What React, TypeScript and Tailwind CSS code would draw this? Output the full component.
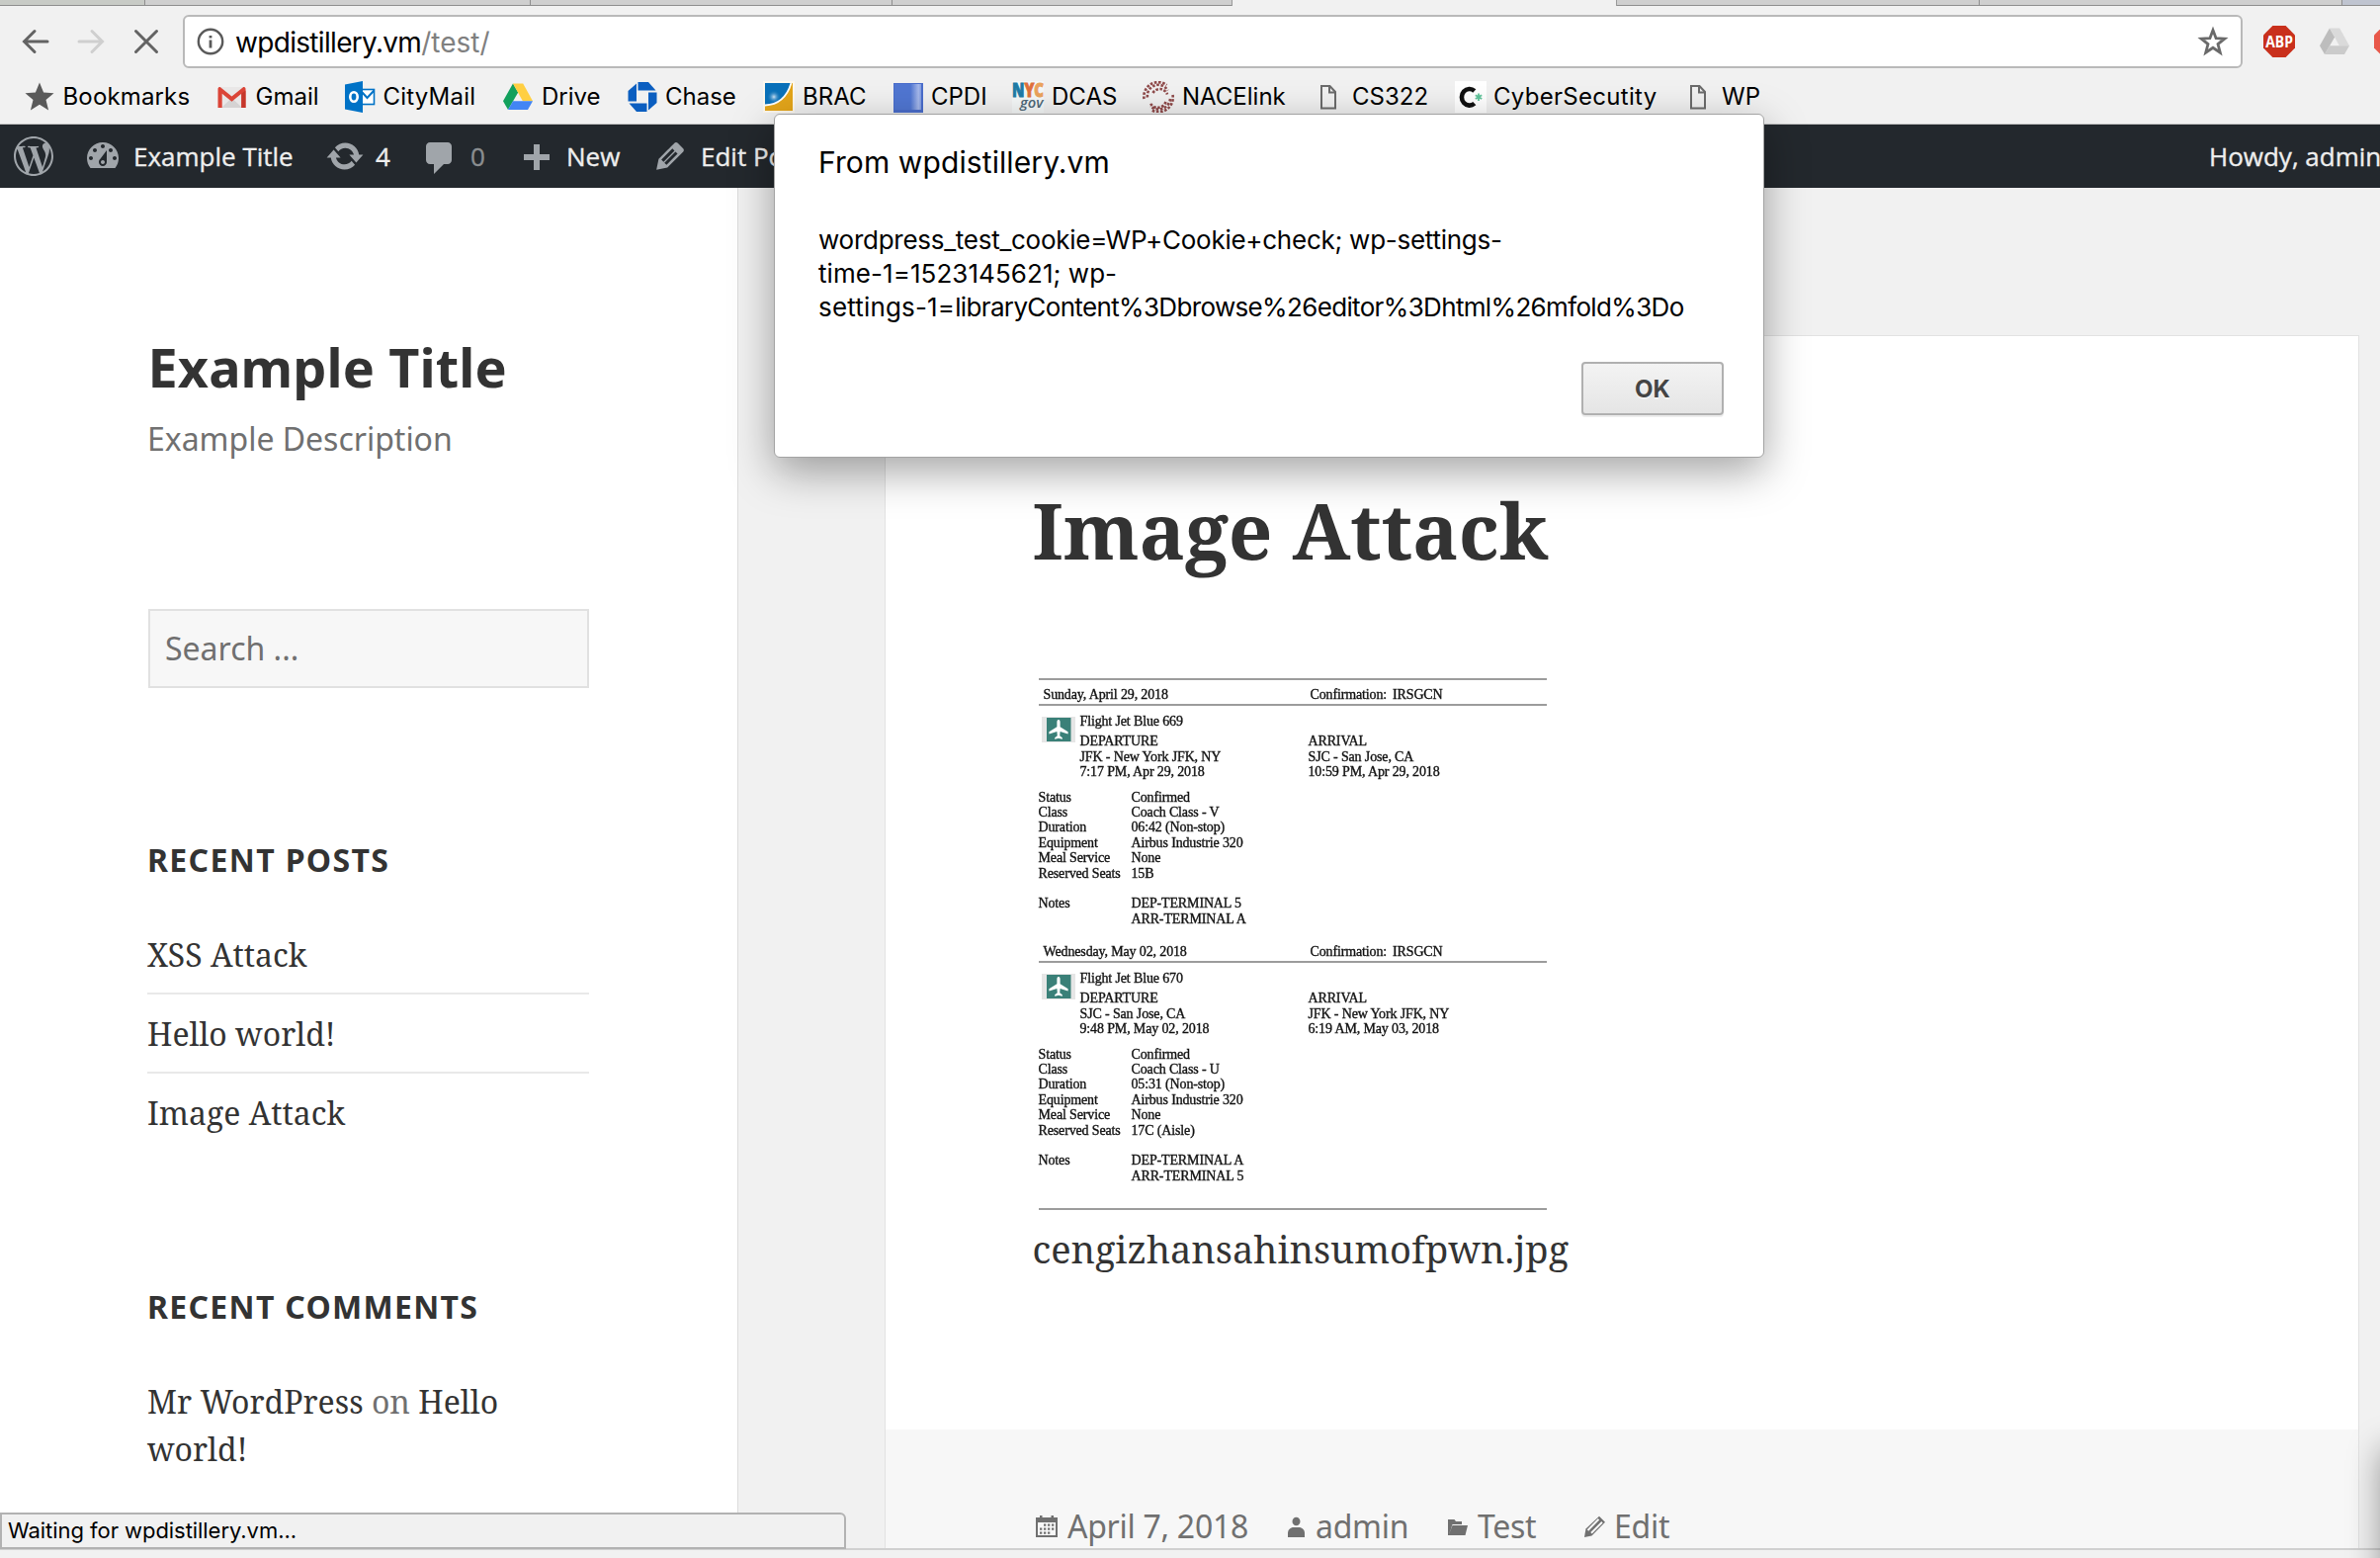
import type { ReactNode } from "react";
import { SiWordpress } from "react-icons/si";

/* ---------- browser chrome icons ---------- */

function NavIcon({ d, className }: { d: string; className: string }) {
  return (
    <svg viewBox="0 0 32 32" className={`size-8 shrink-0 fill-none ${className}`} strokeWidth="3">
      <path d={d} strokeLinecap="round" />
    </svg>
  );
}

function InfoIcon() {
  return (
    <svg viewBox="0 0 28 28" className="size-7 shrink-0">
      <circle cx="14" cy="14" r="12.2" fill="none" stroke="#5a5a5a" strokeWidth="2.4" />
      <path d="M12.6 8h2.8v2.6h-2.8zM12.6 12.4h2.8v8h-2.8z" fill="#5a5a5a" />
    </svg>
  );
}

function StarOutline() {
  return (
    <svg viewBox="0 0 32 32" className="size-8 shrink-0">
      <path
        d="M16 4.5l3.1 8.2 8.7.5-6.8 5.4 2.3 8.6-7.3-4.9-7.3 4.9 2.3-8.6-6.8-5.4 8.7-.5z"
        fill="none"
        stroke="#6a6a6a"
        strokeWidth="2.8"
      />
    </svg>
  );
}

function AdblockIcon() {
  return (
    <svg viewBox="0 0 32 32" className="size-8 shrink-0">
      <path d="M9.4 0h13.2L32 9.4v13.2L22.6 32H9.4L0 22.600V9.400z" fill="#c9301c" />
      <text
        x="2.300"
        y="22"
        textLength="27.600"
        lengthAdjust="spacingAndGlyphs"
        fontFamily="Open Sans, sans-serif"
        fontWeight="700"
        fontSize="16.500"
        fill="#fff"
      >
        ABP
      </text>
    </svg>
  );
}

function DriveShape({ left, right, bottom }: { left: string; right: string; bottom: string }) {
  return (
    <svg viewBox="0 0 32 32" className="size-8 shrink-0">
      <path d="M11 2.5L1 20.3l5 8.7 10.2-17.6z" fill={left} />
      <path d="M11 2.5h10.2L31 20.3H20.9z" fill={right} />
      <path d="M11 20.3h20L26 29H6z" fill={bottom} />
    </svg>
  );
}

function BookmarkStar() {
  return (
    <svg viewBox="0 0 32 32" className="size-8 shrink-0">
      <path d="M16 1.5l4.1 9.9 10.4.8-8 6.8 2.6 10.5L16 23.8l-9.100 5.700 2.600-10.500-8-6.800 10.400-.8z" fill="#5a5a5a" />
    </svg>
  );
}

function GmailIcon() {
  return (
    <svg viewBox="0 0 32 32" className="size-8 shrink-0">
      <rect x="2" y="6" width="27" height="21" rx="1.500" fill="#e9e7e7" />
      <path d="M5 27l10.500-10L26 27z" fill="#d5d3d3" />
      <path d="M1.500 27V8c0-1.500 1-2 2.200-2L15.500 15.500 27.300 6c1.200 0 2.200.5 2.200 2v19h-4.200V12.800l-9.800 8-9.800-8V27z" fill="#db4437" />
      <path d="M25.300 12.800L29.500 9.500V27h-4.200z" fill="#c5372b" />
    </svg>
  );
}

function OutlookIcon() {
  return (
    <svg viewBox="0 0 32 32" className="size-8 shrink-0">
      <rect x="17" y="8.500" width="12.500" height="15" fill="#fff" stroke="#0072c6" strokeWidth="1.600" />
      <path d="M17.500 11.500l5 5.500 7-7.500" fill="none" stroke="#0072c6" strokeWidth="2" />
      <path d="M0 3.500L18 0v32L0 28.500z" fill="#0072c6" />
      <ellipse cx="9" cy="16" rx="3.700" ry="4.700" fill="none" stroke="#fff" strokeWidth="2.600" />
    </svg>
  );
}

function ChaseIcon() {
  return (
    <svg viewBox="0 0 32 32" className="size-8 shrink-0" fill="#0b5ec0">
      <path d="M11.500 1h10.500l7.500 8.500H11.500z" />
      <path d="M30.500 11.500V22l-8.500 7.500V11.500z" />
      <path d="M20.500 31H10l-7.500-8.500h18z" />
      <path d="M1.500 20.500V10L10 2.500v18z" />
    </svg>
  );
}

function BracIcon() {
  return (
    <svg viewBox="0 0 32 32" className="size-8 shrink-0">
      <defs>
        <radialGradient id="brac-glow">
          <stop offset="0" stopColor="#cfe4f4" />
          <stop offset="1" stopColor="#0a71b9" stopOpacity="0" />
        </radialGradient>
      </defs>
      <rect width="32" height="32" fill="#fdf8ee" />
      <rect x="2" y="2" width="28" height="28" fill="#0a71b9" />
      <circle cx="11" cy="16" r="7" fill="url(#brac-glow)" />
      <path d="M30 2v28H2v-6C15 24 24 17 28.500 2z" fill="#e3a51a" />
      <path d="M2 24.500C15 24 24 17 28.500 2" fill="none" stroke="#fff" strokeWidth="1.800" />
    </svg>
  );
}

function CpdiIcon() {
  return (
    <svg viewBox="0 0 32 32" className="size-8 shrink-0">
      <defs>
        <linearGradient id="cpdi-shine">
          <stop offset="0.600" stopColor="#5076d2" />
          <stop offset="0.900" stopColor="#a5b8ea" />
          <stop offset="1" stopColor="#7f9be0" />
        </linearGradient>
      </defs>
      <rect y="2" width="30" height="30" fill="#4a6dcb" />
      <rect x="1" y="3" width="27" height="26" fill="url(#cpdi-shine)" />
    </svg>
  );
}

function NycIcon() {
  return (
    <svg viewBox="0 0 32 32" className="size-8 shrink-0 overflow-visible">
      <rect width="32" height="32" fill="#f5f8f8" />
      <text
        x="0"
        y="15.500"
        textLength="32"
        lengthAdjust="spacingAndGlyphs"
        fontFamily="Open Sans, sans-serif"
        fontWeight="800"
        fontSize="20"
        strokeWidth="1"
      >
        <tspan fill="#1f7ba6" stroke="#1f7ba6">N</tspan>
        <tspan fill="#e0703c" stroke="#e0703c">Y</tspan>
        <tspan fill="#eba35c" stroke="#eba35c">C</tspan>
      </text>
      <text
        x="8"
        y="27"
        textLength="23.500"
        lengthAdjust="spacingAndGlyphs"
        fontFamily="Open Sans, sans-serif"
        fontStyle="italic"
        fontWeight="600"
        fontSize="15"
        fill="#4f6878"
      >
        gov
      </text>
    </svg>
  );
}

function NaceIcon() {
  return (
    <svg viewBox="0 0 32 32" className="size-8 shrink-0 fill-none" stroke="#8f4a4a" strokeWidth="2.600">
      <path d="M1.500 18A14.500 14.500 0 0 1 24.500 4" strokeDasharray="2.600 1.600" />
      <path d="M5 16.500A11 11 0 0 1 25.500 9.500" strokeDasharray="2.600 1.700" />
      <path d="M10.500 12A8 8 0 0 1 25 13.500" strokeDasharray="2.600 1.500" />
      <path d="M30.500 14A14.500 14.500 0 0 1 8.500 29" strokeDasharray="2.600 1.600" />
      <path d="M28 18A12 12 0 0 1 8 25.500" strokeDasharray="2.600 1.700" />
      <path d="M23.500 21A8.500 8.500 0 0 1 7.500 21.500" strokeDasharray="2.600 1.500" />
    </svg>
  );
}

function PageIcon() {
  return (
    <svg viewBox="0 0 32 32" className="size-8 shrink-0 fill-none" stroke="#6b6b6b" strokeWidth="2">
      <path d="M9 5h8.500l5.500 6v16.500H9z" />
      <path d="M17 5v6.500h6" />
    </svg>
  );
}

function CyberIcon() {
  return (
    <svg viewBox="0 0 32 32" className="size-8 shrink-0">
      <rect width="32" height="32" fill="#fff" />
      <path d="M19.800 10a7.800 8.300 0 1 0 0 12.600" fill="none" stroke="#111" strokeWidth="4.600" />
      <path d="M24 12.500v7.500M20.800 14.300l6.400 3.800M27.200 14.300l-6.400 3.800" stroke="#5fc39a" strokeWidth="1.800" />
    </svg>
  );
}

/* ---------- admin bar ---------- */

function AdminIcon({ d }: { d: string }) {
  return (
    <svg viewBox="0 0 20 20" className="size-10 shrink-0 fill-[#a0a5aa]">
      <path d={d} />
    </svg>
  );
}

const DASHBOARD =
  "M3.760 16h12.480c1.100-1.370 1.760-3.110 1.760-5 0-4.420-3.580-8-8-8s-8 3.580-8 8c0 1.890.66 3.630 1.760 5zM10 4c.55 0 1 .45 1 1s-.45 1-1 1-1-.45-1-1 .45-1 1-1zM6 6c.55 0 1 .45 1 1s-.45 1-1 1-1-.45-1-1 .45-1 1-1zm8 0c.55 0 1 .45 1 1s-.45 1-1 1-1-.45-1-1 .45-1 1-1zm-5.370 5.550L12 7v6c0 1.100-.9 2-2 2s-2-.9-2-2c0-.57.24-1.080.63-1.450zM4 10c.55 0 1 .45 1 1s-.45 1-1 1-1-.45-1-1 .45-1 1-1zm12 0c.55 0 1 .45 1 1s-.45 1-1 1-1-.45-1-1 .45-1 1-1zm-5 3c0-.55-.45-1-1-1s-1 .45-1 1 .45 1 1 1 1-.45 1-1z";
const UPDATE =
  "M10.200 3.280c3.530 0 6.430 2.610 6.920 6h2.080l-3.500 4-3.500-4h2.320c-.45-1.970-2.210-3.450-4.320-3.450-1.450 0-2.730.71-3.540 1.780L4.950 5.660C6.230 4.200 8.110 3.280 10.200 3.280zm-.4 13.440c-3.520 0-6.430-2.610-6.920-6H.8l3.500-4c1.170 1.330 2.330 2.670 3.500 4H5.480c.45 1.970 2.210 3.450 4.320 3.450 1.450 0 2.730-.71 3.540-1.780l1.710 1.950c-1.280 1.460-3.150 2.380-5.250 2.380z";
const COMMENT =
  "M5 2h9c1.100 0 2 .9 2 2v7c0 1.100-.9 2-2 2h-2l-5 5v-5H5c-1.100 0-2-.9-2-2V4c0-1.100.9-2 2-2z";
const PLUS = "M9 4h3v5h5v3h-5v5H9v-5H4V9h5z";
const EDIT =
  "M13.890 3.390l2.710 2.720c.46.46.42 1.240.03 1.640l-8.010 8.020-5.560 1.160 1.160-5.580s7.600-7.630 7.990-8.030c.39-.39 1.220-.39 1.680.07zm-2.730 2.790l-5.590 5.610 1.110 1.110 5.540-5.650zm-2.970 8.230l5.580-5.600-1.070-1.080-5.590 5.600z";

function AdminBar() {
  return (
    <div className="flex h-16 items-center bg-[#23282d] font-['Open_Sans',sans-serif] text-[26px] leading-[64px] whitespace-nowrap text-[#eee] [-webkit-text-stroke:0.35px_currentColor]">
      <SiWordpress className="ml-[14px] size-10 shrink-0 text-[#a0a5aa]" />
      <div className="ml-[30px] flex w-[245px] shrink-0 items-center gap-[11px]">
        <AdminIcon d={DASHBOARD} />
        Example Title
      </div>
      <div className="flex w-24 shrink-0 items-center gap-[11px]">
        <AdminIcon d={UPDATE} />4
      </div>
      <div className="flex w-[97px] shrink-0 items-center gap-[11px]">
        <span className="mt-1 flex">
          <AdminIcon d={COMMENT} />
        </span>
        <span className="text-[#8b8e91]">0</span>
      </div>
      <div className="flex w-[136px] shrink-0 items-center gap-[11px]">
        <AdminIcon d={PLUS} />
        New
      </div>
      <div className="flex shrink-0 items-center gap-[11px]">
        <AdminIcon d={EDIT} />
        Edit Post
      </div>
      <span className="ml-auto w-[174px] shrink-0 overflow-hidden pl-px">Howdy, admin</span>
    </div>
  );
}

/* ---------- browser chrome ---------- */

function TabStrip() {
  return (
    <div className="flex h-[6px] overflow-hidden bg-[#cfcfcf]">
      <div className="w-[146px] border-b border-[#8e8e8e] bg-[#c8cbc6]" />
      <div className="w-[390px] border-b border-l border-[#8e8e8e]" />
      <div className="w-[366px] border-b border-l border-[#8e8e8e]" />
      <div className="w-[344px] border-b border-l border-[#8e8e8e]" />
      <div className="w-[390px] border-x border-[#9a9a9a] bg-[#f1f1f1]" />
      <div className="w-[366px] border-b border-[#8e8e8e]" />
      <div className="w-[367px] border-b border-l border-[#8e8e8e]" />
      <div className="flex-1 border-b border-l border-[#8e8e8e] bg-[#bfc4d0]" />
    </div>
  );
}

function Toolbar() {
  return (
    <div className="flex h-[64px] items-center pt-[8px]">
      <div className="ml-[20px] flex gap-6">
        <NavIcon className="stroke-[#636363]" d="M28 16H5M15 5.500L4.500 16 15 26.500" />
        <NavIcon className="stroke-[#cfcfcf]" d="M4 16h23M17 5.500L27.500 16 17 26.500" />
        <NavIcon className="stroke-[#636363]" d="M5.500 5.500l21 21M26.500 5.500l-21 21" />
      </div>
      <div className="ml-[21px] flex h-[54px] w-[2084px] shrink-0 items-center rounded-[6px] border-2 border-[#b9b9b9] bg-white px-3 font-[Inter,sans-serif]">
        <InfoIcon />
        <span className="mt-[2px] ml-[11px] text-[28px] leading-[40px] tracking-[-0.68px] text-black">wpdistillery.vm</span>
        <span className="mt-[2px] text-[28px] leading-[40px] text-[#808080]">/test/</span>
        <span className="ml-auto flex">
          <StarOutline />
        </span>
      </div>
      <div className="ml-[21px] flex shrink-0 gap-6">
        <AdblockIcon />
        <DriveShape left="#bdbdbd" right="#dadada" bottom="#cbcbcb" />
        <svg viewBox="0 0 32 32" className="size-8 shrink-0">
          <path d="M9.400 0h13.200L32 9.400v13.200L22.600 32H9.400L0 22.600V9.400z" fill="#e8584a" />
        </svg>
      </div>
    </div>
  );
}

const BOOKMARKS: { label: string; icon: ReactNode; box: string }[] = [
  { label: "Bookmarks", icon: <BookmarkStar />, box: "w-[195px] gap-[7.5px] tracking-[0.15px]" },
  { label: "Gmail", icon: <GmailIcon />, box: "w-[130px] gap-[7.5px]" },
  { label: "CityMail", icon: <OutlookIcon />, box: "w-[159px] gap-[6.5px] tracking-[0.2px]" },
  { label: "Drive", icon: <DriveShape left="#12a05c" right="#ffcf42" bottom="#4285f4" />, box: "w-[126px] gap-[8px]" },
  { label: "Chase", icon: <ChaseIcon />, box: "w-[138px] gap-[7px]" },
  { label: "BRAC", icon: <BracIcon />, box: "w-[132px] gap-[8px]" },
  { label: "CPDI", icon: <CpdiIcon />, box: "w-[120px] gap-[6px]" },
  { label: "DCAS", icon: <NycIcon />, box: "w-[132px] gap-[8px]" },
  { label: "NACElink", icon: <NaceIcon />, box: "w-[172px] gap-[8px]" },
  { label: "CS322", icon: <PageIcon />, box: "w-[144px] gap-[8px]" },
  { label: "CyberSecutity", icon: <CyberIcon />, box: "w-[230px] gap-[7px] tracking-[0.3px]" },
  { label: "WP", icon: <PageIcon />, box: "gap-[8px]" },
];

function BookmarkBar() {
  return (
    <div className="flex h-[56px] items-center border-b border-[#c6c6c6] pl-6 font-[Inter,sans-serif] text-[24px] leading-8 text-black">
      {BOOKMARKS.map((b) => (
        <div key={b.label} className={`flex shrink-0 items-center whitespace-nowrap ${b.box}`}>
          {b.icon}
          {b.label}
        </div>
      ))}
    </div>
  );
}

/* ---------- page ---------- */

function Sidebar() {
  return (
    <aside className="w-[747px] shrink-0 border-r border-[#dcdcdc] bg-white pl-[149px] font-['Noto_Serif',serif] text-[32px] leading-[48px] text-[#333]">
      <h1 className="ml-[0.5px] pt-[148px] font-['Noto_Sans',sans-serif] text-[54px] leading-[66px] font-bold tracking-[0.1px]">
        Example Title
      </h1>
      <p className="mt-[16px] font-['Noto_Sans',sans-serif] tracking-[-0.02px] text-[#707070]">Example Description</p>
      <div className="mt-[148px] ml-px flex h-20 w-[446px] items-center border-2 border-[#e1e1e1] bg-[#f7f7f7] pl-[15px] font-['Noto_Sans',sans-serif] text-[#707070]">
        Search ...
      </div>
      <h2 className="mt-[150px] font-['Noto_Sans',sans-serif] font-bold tracking-[1.35px]">RECENT POSTS</h2>
      <ul className="mt-[48px] w-[447px]">
        <li className="border-b-2 border-[#e9e9e9] pb-[14px]">XSS Attack</li>
        <li className="border-b-2 border-[#e9e9e9] pt-4 pb-[14px]">Hello world!</li>
        <li className="pt-4">Image Attack</li>
      </ul>
      <h2 className="mt-[148px] font-['Noto_Sans',sans-serif] font-bold tracking-[1.3px]">RECENT COMMENTS</h2>
      <p className="mt-[48px] w-[447px]">
        Mr WordPress <span className="text-[#707070]">on</span> Hello world!
      </p>
    </aside>
  );
}

interface Leg {
  date: string;
  flight: string;
  departure: string[];
  arrival: string[];
  details: [string, string][];
}

const LEGS: Leg[] = [
  {
    date: "Sunday, April 29, 2018",
    flight: "Flight Jet Blue 669",
    departure: ["DEPARTURE", "JFK - New York JFK, NY", "7:17 PM, Apr 29, 2018"],
    arrival: ["ARRIVAL", "SJC - San Jose, CA", "10:59 PM, Apr 29, 2018"],
    details: [
      ["Status", "Confirmed"],
      ["Class", "Coach Class - V"],
      ["Duration", "06:42 (Non-stop)"],
      ["Equipment", "Airbus Industrie 320"],
      ["Meal Service", "None"],
      ["Reserved Seats", "15B"],
      ["", ""],
      ["Notes", "DEP-TERMINAL 5"],
      ["", "ARR-TERMINAL A"],
    ],
  },
  {
    date: "Wednesday, May 02, 2018",
    flight: "Flight Jet Blue 670",
    departure: ["DEPARTURE", "SJC - San Jose, CA", "9:48 PM, May 02, 2018"],
    arrival: ["ARRIVAL", "JFK - New York JFK, NY", "6:19 AM, May 03, 2018"],
    details: [
      ["Status", "Confirmed"],
      ["Class", "Coach Class - U"],
      ["Duration", "05:31 (Non-stop)"],
      ["Equipment", "Airbus Industrie 320"],
      ["Meal Service", "None"],
      ["Reserved Seats", "17C (Aisle)"],
      ["", ""],
      ["Notes", "DEP-TERMINAL A"],
      ["", "ARR-TERMINAL 5"],
    ],
  },
];

function PlaneIcon() {
  return (
    <svg viewBox="0 0 34 26" className="h-[26px] w-[34px]">
      <rect width="34" height="26" fill="#e6e6e6" />
      <rect x="5" y="1" width="24.500" height="24" fill="#3a8078" />
      <path
        d="M17 3c1.100 0 1.600 1.200 1.600 2.600v4.600l8 5v2.200l-8-2.400-.4 4.200 2.600 2v1.600l-3.800-1-3.800 1v-1.600l2.600-2-.4-4.200-8 2.400v-2.200l8-5V5.600C15.400 4.200 15.900 3 17 3z"
        fill="#fff"
      />
    </svg>
  );
}

function Lines({ items }: { items: string[] }) {
  return (
    <div>
      {items.map((t) => (
        <div key={t}>{t}</div>
      ))}
    </div>
  );
}

function Itinerary() {
  return (
    <div className="mt-[105px] ml-[6px] h-[538px] w-[514px] border-y-2 border-[#9c9c9c] font-['Liberation_Serif',serif] text-[14px] leading-[15.4px] tracking-[-0.14px] whitespace-nowrap text-[#111] blur-[0.65px] [-webkit-text-stroke:0.35px_currentColor]">
      {LEGS.map((leg) => (
        <section key={leg.date} className="h-[260px]">
          <div className="grid h-[26px] grid-cols-[270px_1fr] border-b-2 border-[#9c9c9c] pt-[7px] pl-[5px]">
            <span>{leg.date}</span>
            <span>
              Confirmation:<span className="ml-[6px]">IRSGCN</span>
            </span>
          </div>
          <div className="grid grid-cols-[42px_231px_1fr] pt-[7.500px]">
            <div className="row-span-2 -ml-px pt-[3px] pl-[4px]">
              <PlaneIcon />
            </div>
            <div className="col-span-2 pb-[5.500px]">{leg.flight}</div>
            <Lines items={leg.departure} />
            <Lines items={leg.arrival} />
          </div>
          <div className="mt-[10px]">
            {leg.details.map(([k, v], i) => (
              <div key={i} className="grid h-[15.400px] grid-cols-[94px_1fr]">
                <span>{k}</span>
                <span>{v}</span>
              </div>
            ))}
          </div>
        </section>
      ))}
    </div>
  );
}

function MetaIcon({ children }: { children: ReactNode }) {
  return (
    <svg viewBox="0 0 32 32" className="size-8 shrink-0 fill-[#707070]">
      {children}
    </svg>
  );
}

function EntryFooter() {
  return (
    <footer className="flex h-[120px] overflow-hidden bg-[#f7f7f7] pt-[74px] pl-[149px] font-['Noto_Sans',sans-serif] text-[32px] leading-[48px] tracking-[-0.28px] whitespace-nowrap text-[#707070]">
      <div className="flex h-12 w-[250px] items-center gap-[3px]">
        <MetaIcon>
          <path fillRule="evenodd" d="M3 7h4V5h2.500v2h9V5H21v2h4v20H3zm2 5v13h18V12z" />
          <path d="M11 13.500h2.300v2.300H11zm4 0h2.300v2.300H15zm4 0h2.300v2.300H19zM7 17.500h2.300v2.300H7zm4 0h2.300v2.300H11zm4 0h2.300v2.300H15zm4 0h2.300v2.300H19zM7 21.500h2.300v2.300H7zm4 0h2.300v2.300H11zm4 0h2.300v2.300H15z" />
        </MetaIcon>
        April 7, 2018
      </div>
      <div className="flex h-12 w-[163px] items-center gap-[4px]">
        <MetaIcon>
          <ellipse cx="16.500" cy="11" rx="4" ry="4.300" />
          <path d="M8 27v-4c0-3.500 2.500-6 6-6h5c3.500 0 6 2.500 6 6v4z" />
        </MetaIcon>
        admin
      </div>
      <div className="flex h-12 w-[139px] items-center gap-[5px]">
        <MetaIcon>
          <path d="M7 25V9h6.500l1.500 2h6v3H11.500L9 22v-5l1-4.500L8.500 25z" />
          <path d="M11.500 15H27l-2.500 10H7.500z" />
        </MetaIcon>
        Test
      </div>
      <div className="flex h-12 items-center gap-[4px]">
        <MetaIcon>
          <path d="M7.500 18.500L21 5.800l6 6L13.500 25.500 6 27z" />
          <path d="M9.500 20l11-11.300M13 22.800l11-11" fill="none" stroke="#f7f7f7" strokeWidth="2" />
        </MetaIcon>
        Edit
      </div>
    </footer>
  );
}

function Article() {
  return (
    <article className="mt-[149px] ml-[148px] flex h-[1227px] w-[1492px] flex-col border border-b-0 border-[#e2e2e2] bg-white text-[#333]">
      <div className="h-[1106px] pl-[148.5px]">
        <h2 className="pt-[151px] font-['Noto_Serif',serif] text-[78px] leading-[90px] font-bold tracking-[-0.1px]">
          Image Attack
        </h2>
        <Itinerary />
        <p className="mt-[13px] font-['Noto_Serif',serif] text-[38px] leading-[52px] tracking-[-0.03px]">
          cengizhansahinsumofpwn.jpg
        </p>
      </div>
      <EntryFooter />
    </article>
  );
}

function AlertDialog() {
  return (
    <div className="absolute top-[115px] left-[783px] h-[348px] w-[1002px] rounded-[6px] border border-[#a3a3a3] bg-white pr-[40px] pl-[44px] font-[Inter,sans-serif] text-black shadow-[0_14px_44px_rgba(0,0,0,0.36)]">
      <p className="pt-[30px] text-[30px] leading-9 tracking-[0.1px]">From wpdistillery.vm</p>
      <div className="mt-[44px] text-[26px] leading-[34px] whitespace-nowrap">
        <p className="tracking-[-0.26px]">wordpress_test_cookie=WP+Cookie+check; wp-settings-</p>
        <p className="tracking-[0.06px]">time-1=1523145621; wp-</p>
        <p className="tracking-[-0.65px]">
          <span className="tracking-[0.17px]">settings-1=</span>libraryContent%3Dbrowse%26editor%3Dhtml%26mfold%3Do
        </p>
      </div>
      <button className="mt-[38px] ml-auto block h-[54px] w-[144px] rounded-[4px] border-2 border-[#b0b0b0] bg-linear-to-b from-[#f3f3f3] to-[#e5e5e5] pt-[2px] text-[24px] leading-[48px] font-bold text-[#444] shadow-[0_2px_0_rgba(0,0,0,0.07)] [text-shadow:0_2px_0_#f4f4f4]">
        OK
      </button>
    </div>
  );
}

export default function App() {
  return (
    <div className="relative flex h-[1576px] w-[2408px] flex-col overflow-hidden bg-[#f1f1f1]">
      <TabStrip />
      <Toolbar />
      <BookmarkBar />
      <AdminBar />
      <main className="flex h-[1376px] shrink-0 overflow-hidden">
        <Sidebar />
        <Article />
      </main>
      <div className="h-[10px] border-t-2 border-[#d0d0d0] bg-[#f1f1f1]" />
      <AlertDialog />
      <div className="absolute top-[1530px] left-0 flex h-[37px] w-[856px] items-center rounded-tr-[6px] border-2 border-[#b2b2b2] bg-[#f1f1f1] pb-[2px] pl-[6px] font-[Inter,sans-serif] text-[22px] leading-8 tracking-[-0.05px] text-black">
        Waiting for wpdistillery.vm...
      </div>
      <div className="absolute top-[1466px] left-[2410px] h-[200px] w-[40px] shadow-[0_0_34px_rgba(0,0,0,0.4)]" />
    </div>
  );
}
